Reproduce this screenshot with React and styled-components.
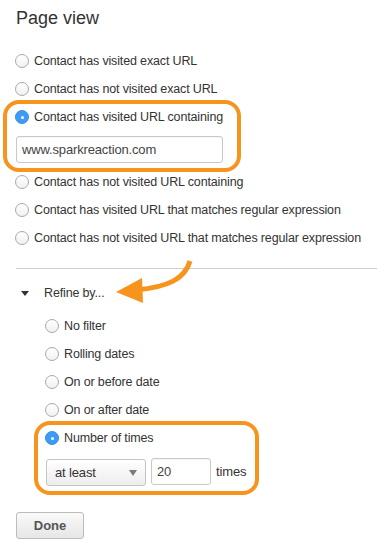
import React from 'react';
import styled, { createGlobalStyle, css } from 'styled-components';

const orange = '#f7941d';

const GlobalStyle = createGlobalStyle`
  html, body {
    margin: 0;
    padding: 0;
    background: #ffffff;
  }
  body {
    font-family: "Liberation Sans", Arial, sans-serif;
    font-size: 12.5px;
    letter-spacing: -0.15px;
    color: #333;
  }
`;

const Page = styled.div`
  position: relative;
  width: 377px;
  height: 553px;
  overflow: hidden;
  padding: 0 0 0 16px;
  box-sizing: border-box;
`;

const Title = styled.h2`
  margin: 0;
  padding-top: 8px;
  height: 39px;
  font-size: 18px;
  font-weight: normal;
  letter-spacing: 0;
  color: #333;
  line-height: 20px;
`;

const Row = styled.label`
  display: flex;
  align-items: center;
  height: 28px;
  gap: 5px;
  white-space: nowrap;
  margin-top: ${p => p.$gap || 0}px;
`;

const Radio = styled.span`
  width: 14px;
  height: 14px;
  border-radius: 50%;
  box-sizing: border-box;
  flex: none;
  position: relative;
  margin-left: -1px;
  ${p => p.$checked
    ? css`
        background: #3d9bf6;
        border: 1px solid #3a8ee8;
        &::after {
          content: '';
          position: absolute;
          left: 4.5px;
          top: 4.5px;
          width: 3px;
          height: 3px;
          border-radius: 50%;
          background: #fff;
        }
      `
    : css`
        background: linear-gradient(#ffffff, #f1f1f1);
        border: 1px solid #a9a9a9;
      `}
`;

const Highlight = styled.div`
  position: relative;
  &::after {
    content: '';
    position: absolute;
    top: -3px;
    left: ${p => p.$left}px;
    width: ${p => p.$width}px;
    bottom: -9px;
    border: 4px solid ${orange};
    border-radius: 16px;
    box-sizing: border-box;
    pointer-events: none;
  }
`;

const TextInput = styled.div`
  box-sizing: border-box;
  width: ${p => p.$width}px;
  height: 27px;
  margin-top: ${p => p.$gap || 0}px;
  border: 1px solid #c9c9c9;
  border-radius: 3px;
  background: #fff;
  box-shadow: inset 0 1px 1px rgba(0, 0, 0, 0.04);
  display: flex;
  align-items: center;
  padding-left: 5px;
  font-size: 13px;
  color: #444;
`;

const Divider = styled.div`
  height: 1px;
  background: #cfcfcf;
  margin-top: 16px;
`;

const RefineRow = styled.div`
  display: flex;
  align-items: center;
  height: 28px;
  margin-top: 10px;
  padding-left: 5px;
  gap: 15px;
`;

const Caret = styled.span`
  width: 0;
  height: 0;
  border-left: 4.5px solid transparent;
  border-right: 4.5px solid transparent;
  border-top: 5px solid #333;
`;

const SubList = styled.div`
  padding-left: 30px;
  margin-top: 5px;
`;

const Controls = styled.div`
  display: flex;
  align-items: center;
  gap: 5px;
  margin-top: 5px;
`;

const Select = styled.div`
  box-sizing: border-box;
  width: 100px;
  height: 27px;
  margin-top: 2px;
  border: 1px solid #c4c4c4;
  border-radius: 3px;
  background: linear-gradient(#ffffff, #ededed);
  display: flex;
  align-items: center;
  justify-content: space-between;
  padding: 0 8px 0 8px;
  font-size: 13px;
  color: #333;
  &::after {
    content: '';
    border-left: 4.5px solid transparent;
    border-right: 4.5px solid transparent;
    border-top: 6px solid #7a7a7a;
  }
`;

const Suffix = styled.span`
  font-size: 13px;
  color: #333;
`;

const Button = styled.button`
  margin-top: 26px;
  width: 68px;
  height: 27px;
  border: 1px solid #bdbdbd;
  border-radius: 3px;
  background: linear-gradient(#fafafa, #e6e6e6);
  font-family: "Liberation Sans", Arial, sans-serif;
  font-size: 13px;
  font-weight: bold;
  color: #555;
  padding: 0;
`;

const Overlay = styled.svg`
  position: absolute;
  left: 0;
  top: 0;
  pointer-events: none;
`;

const Option = ({ checked, gap, children }) => (
  <Row $gap={gap}>
    <Radio $checked={checked} />
    <span>{children}</span>
  </Row>
);

export default function App() {
  return (
    <>
      <GlobalStyle />
      <Page>
        <Title>Page view</Title>
        <Option>Contact has visited exact URL</Option>
        <Option>Contact has not visited exact URL</Option>
        <Highlight $left={-13} $width={238}>
          <Option checked>Contact has visited URL containing</Option>
          <TextInput $width={207} $gap={5}>www.sparkreaction.com</TextInput>
        </Highlight>
        <Option gap={5}>Contact has not visited URL containing</Option>
        <Option>Contact has visited URL that matches regular expression</Option>
        <Option>Contact has not visited URL that matches regular expression</Option>
        <Divider />
        <RefineRow>
          <Caret />
          <span>Refine by...</span>
        </RefineRow>
        <SubList>
          <Option>No filter</Option>
          <Option>Rolling dates</Option>
          <Option>On or before date</Option>
          <Option>On or after date</Option>
          <Highlight $left={-12} $width={225}>
            <Option checked>Number of times</Option>
            <Controls>
              <Select>at least</Select>
              <TextInput $width={60}>20</TextInput>
              <Suffix>times</Suffix>
            </Controls>
          </Highlight>
        </SubList>
        <Button>Done</Button>
        <Overlay width="377" height="553" viewBox="0 0 377 553">
          <path
            d="M190 261 C 185 279, 168 287, 136 290"
            fill="none"
            stroke={orange}
            strokeWidth="5"
          />
          <polygon points="116,292 142,278 143,303" fill={orange} />
        </Overlay>
      </Page>
    </>
  );
}
